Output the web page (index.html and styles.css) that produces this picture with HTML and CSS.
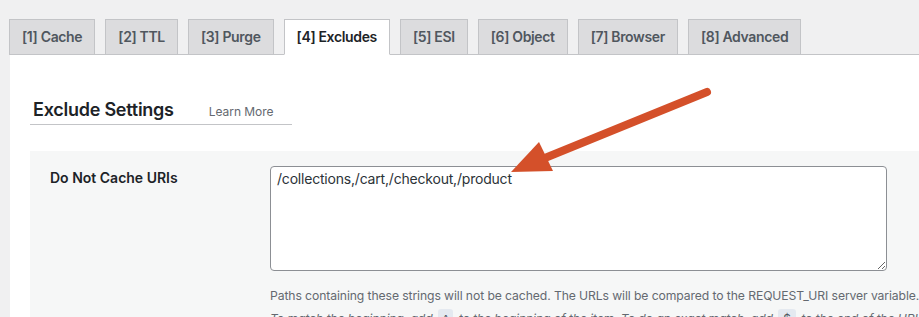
FILE: index.html
```html
<!DOCTYPE html>
<html lang="en">
<head>
<meta charset="utf-8">
<title>Exclude Settings</title>
<link rel="stylesheet" href="styles.css">
</head>
<body>
<div class="page">
  <nav class="tabs">
    <a class="tab">[1] Cache</a>
    <a class="tab">[2] TTL</a>
    <a class="tab">[3] Purge</a>
    <a class="tab tab-active">[4] Excludes</a>
    <a class="tab">[5] ESI</a>
    <a class="tab">[6] Object</a>
    <a class="tab">[7] Browser</a>
    <a class="tab">[8] Advanced</a>
  </nav>
  <section class="panel">
    <div class="heading">
      <h3 class="heading-title">Exclude Settings</h3>
      <a class="heading-link">Learn More</a>
    </div>
    <div class="row">
      <div class="row-label">Do Not Cache URIs</div>
      <div class="row-field">
        <textarea class="uri-input">/collections,/cart,/checkout,/product</textarea>
        <div class="desc">Paths containing these strings will not be cached. The URLs will be compared to the REQUEST_URI server variable.</div>
        <div class="desc desc-italic">To match the beginning, add <code class="token">^</code> to the beginning of the item. To do an exact match, add <code class="token">$</code> to the end of the URL.</div>
      </div>
    </div>
  </section>
</div>
<svg class="arrow" width="919" height="317" viewBox="0 0 919 317" aria-hidden="true">
  <line x1="707" y1="92" x2="540" y2="160" stroke="#d4502a" stroke-width="8" stroke-linecap="round"/>
  <polygon points="511,172 539,142 553,171" fill="#d4502a"/>
</svg>
</body>
</html>
```

FILE: styles.css
```css
* { box-sizing: border-box; }

html, body {
  margin: 0;
  padding: 0;
  background: #f0f0f1;
  font-family: Inter, "Open Sans", "Liberation Sans", sans-serif;
  color: #1d2327;
  overflow: hidden;
}

.page {
  padding-top: 19px;
  padding-left: 9px;
}

.tabs {
  display: flex;
  gap: 10px;
  align-items: flex-end;
  border-bottom: 1px solid #c3c4c7;
  height: 36px;
}

.tab {
  display: block;
  height: 36px;
  padding: 0 12px;
  background: #dcdcde;
  border: 1px solid #c3c4c7;
  font-size: 14px;
  font-weight: 600;
  letter-spacing: -0.35px;
  line-height: 34px;
  color: #50575e;
  white-space: nowrap;
  margin-bottom: -1px;
}

.tab-active {
  background: #fff;
  color: #1d2327;
  border-bottom-color: #fff;
}

.panel {
  background: #fff;
  margin-left: 1px;
  padding: 43px 0 40px 20px;
  min-height: 300px;
}

.heading {
  display: flex;
  align-items: baseline;
  width: 262px;
  padding: 0 3px 2px;
  border-bottom: 1px solid #c3c4c7;
}

.heading-title {
  margin: 0;
  font-size: 18px;
  font-weight: 600;
  letter-spacing: -0.25px;
  line-height: 24px;
  color: #1d2327;
}

.heading-link {
  margin-left: 35px;
  font-size: 12px;
  letter-spacing: -0.05px;
  color: #646970;
}

.row {
  display: flex;
  margin-top: 26px;
  background: #f6f7f7;
  padding: 15px 0 20px;
}

.row-label {
  width: 240px;
  flex: none;
  padding-left: 20px;
  padding-top: 2px;
  font-size: 14px;
  font-weight: 600;
  line-height: 20px;
  color: #1d2327;
}

.row-field {
  flex: 1;
  min-width: 0;
}

.uri-input {
  display: block;
  width: 617px;
  height: 105px;
  padding: 2px 6px;
  border: 1px solid #8c8f94;
  border-radius: 4px;
  background: #fff;
  font-family: Inter, "Open Sans", "Liberation Sans", sans-serif;
  font-size: 14px;
  letter-spacing: -0.2px;
  line-height: 20px;
  color: #2c3338;
  resize: both;
}

.desc {
  margin-top: 15px;
  font-size: 12.2px;
  letter-spacing: -0.1px;
  line-height: 20px;
  color: #646970;
  white-space: nowrap;
}

.desc-italic {
  margin-top: 3px;
  font-style: italic;
}

.token {
  font-family: Inter, "Liberation Sans", sans-serif;
  font-style: normal;
  font-size: 12px;
  background: #e4e9f0;
  border-radius: 3px;
  padding: 2px 5px;
  margin: 0 2px;
  color: #50575e;
}

.arrow {
  position: absolute;
  left: 0;
  top: 0;
  pointer-events: none;
}
```
